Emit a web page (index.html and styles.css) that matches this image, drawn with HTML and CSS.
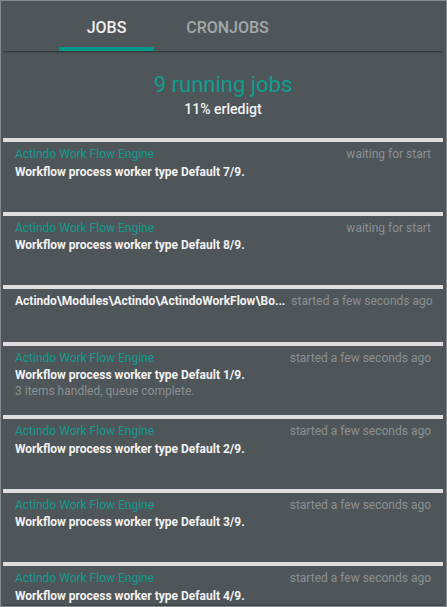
FILE: index.html
```html
<!DOCTYPE html>
<html>
<head>
<meta charset="utf-8">
<link rel="stylesheet" href="styles.css">
</head>
<body>
<div class="frame">
  <div class="panel">
    <nav class="tabs">
      <div class="tab tab-active">Jobs</div>
      <div class="tab tab-cron">Cronjobs</div>
    </nav>
    <section class="summary">
      <div class="summary-count">9 running jobs</div>
      <div class="summary-done">11% erledigt</div>
    </section>
    <ul class="jobs">
      <li class="job">
        <div class="job-head"><span class="job-title">Actindo Work Flow Engine</span><span class="job-status">waiting for start</span></div>
        <div class="job-name">Workflow process worker type Default 7/9.</div>
        <div class="job-desc"></div>
      </li>
      <li class="job">
        <div class="job-head"><span class="job-title">Actindo Work Flow Engine</span><span class="job-status">waiting for start</span></div>
        <div class="job-name">Workflow process worker type Default 8/9.</div>
        <div class="job-desc"></div>
      </li>
      <li class="job">
        <div class="job-head"><span class="job-title job-title-bold">Actindo\Modules\Actindo\ActindoWorkFlow\Bo...</span><span class="job-status">started a few seconds ago</span></div>
        <div class="job-desc"></div>
      </li>
      <li class="job">
        <div class="job-head"><span class="job-title">Actindo Work Flow Engine</span><span class="job-status">started a few seconds ago</span></div>
        <div class="job-name">Workflow process worker type Default 1/9.</div>
        <div class="job-desc">3 items handled, queue complete.</div>
      </li>
      <li class="job">
        <div class="job-head"><span class="job-title">Actindo Work Flow Engine</span><span class="job-status">started a few seconds ago</span></div>
        <div class="job-name">Workflow process worker type Default 2/9.</div>
        <div class="job-desc"></div>
      </li>
      <li class="job">
        <div class="job-head"><span class="job-title">Actindo Work Flow Engine</span><span class="job-status">started a few seconds ago</span></div>
        <div class="job-name">Workflow process worker type Default 3/9.</div>
        <div class="job-desc"></div>
      </li>
      <li class="job">
        <div class="job-head"><span class="job-title">Actindo Work Flow Engine</span><span class="job-status">started a few seconds ago</span></div>
        <div class="job-name">Workflow process worker type Default 4/9.</div>
        <div class="job-desc"></div>
      </li>
    </ul>
  </div>
</div>
</body>
</html>
```

FILE: styles.css
```css
html, body {
  margin: 0;
  padding: 0;
  height: 100%;
  overflow: hidden;
}

body {
  background: #4f5659;
  font-family: Roboto, "Liberation Sans", sans-serif;
}

.frame {
  box-sizing: border-box;
  height: 607px;
  border: 1px solid #858a8c;
  padding: 0 3px 0 2px;
  background: #4f5659;
  overflow: hidden;
}

.panel {
  height: 100%;
  overflow: hidden;
  border-bottom: 2px solid #454b4e;
  box-sizing: border-box;
}

.tabs {
  display: flex;
  padding-left: 56px;
  box-shadow: 0 1px 2px rgba(0, 0, 0, 0.45);
  position: relative;
}

.tab {
  box-sizing: border-box;
  height: 50px;
  padding-top: 17px;
  line-height: 20px;
  font-size: 16px;
  font-weight: 500;
  text-transform: uppercase;
  text-align: center;
  border-bottom: 4px solid transparent;
  color: #a4a8aa;
}

.tab-active {
  width: 95px;
  color: #eeeeee;
  border-bottom-color: #009688;
}

.tab-cron {
  width: 147px;
}

.summary {
  padding: 20.5px 0 20.5px;
  text-align: center;
}

.summary-count {
  font-size: 22px;
  line-height: 26px;
  font-weight: 400;
  color: #0f9d91;
}

.summary-done {
  margin-top: 2px;
  font-size: 14px;
  line-height: 18px;
  font-weight: 500;
  color: #f2f2f2;
}

.jobs {
  list-style: none;
  margin: 0;
  padding: 0;
}

.job {
  border-top: 4px solid #dedede;
  padding: 4px 12px 14px 12px;
}

.job-head {
  display: flex;
  justify-content: space-between;
  gap: 6px;
  height: 17.5px;
  line-height: 17.5px;
  font-size: 12px;
}

.job-title {
  white-space: nowrap;
  color: #129a8e;
}

.job-title-bold {
  font-weight: 700;
  color: #f2f2f2;
}

.job-status {
  flex: none;
  white-space: nowrap;
  color: #8b9093;
}

.job-name {
  height: 17px;
  line-height: 17px;
  font-size: 12px;
  font-weight: 700;
  color: #f2f2f2;
}

.job-desc {
  height: 17px;
  line-height: 15px;
  font-size: 12px;
  color: #8b9093;
}
```
